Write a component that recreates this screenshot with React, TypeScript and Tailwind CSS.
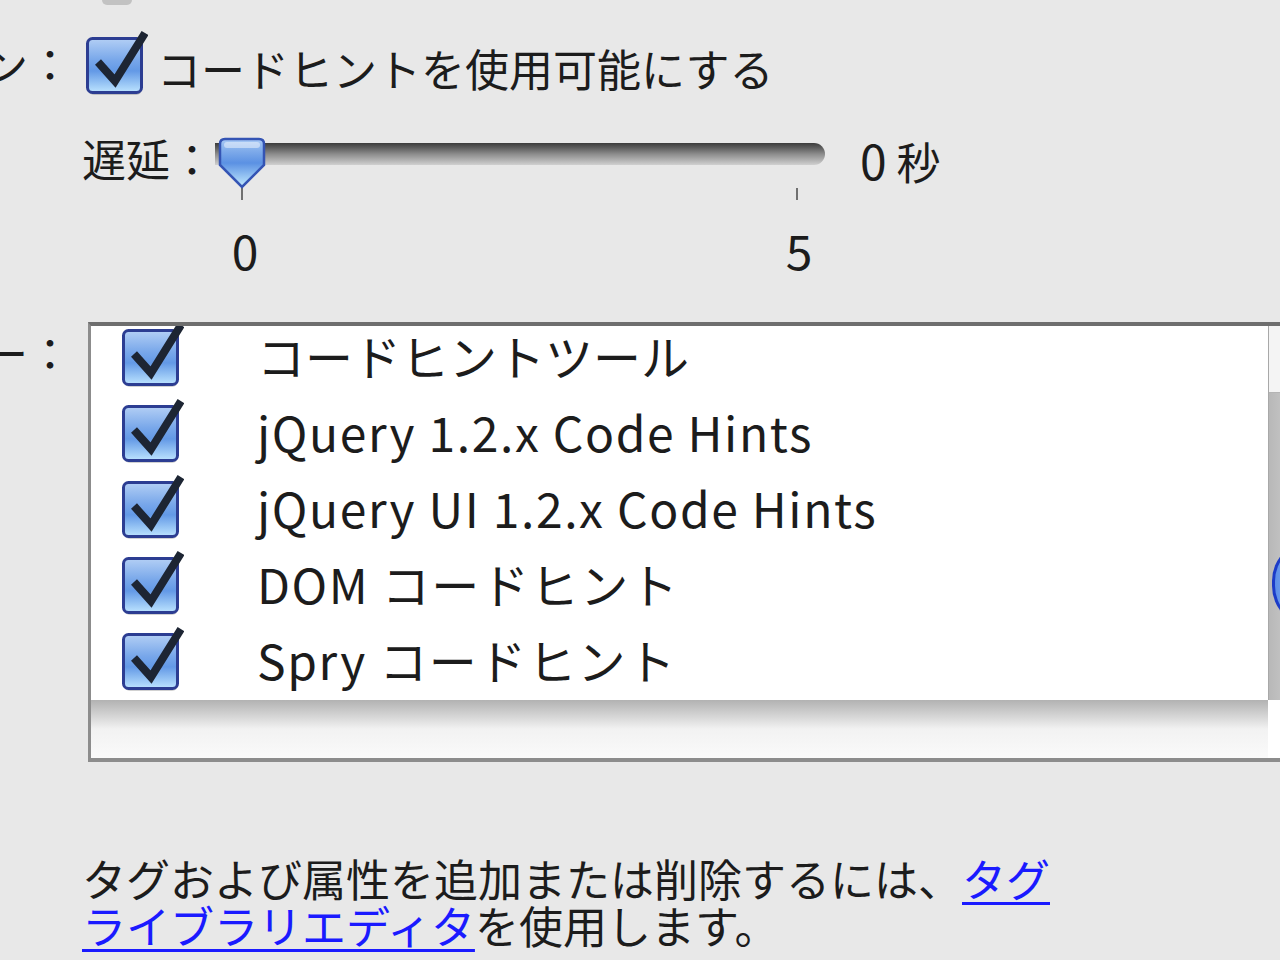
import React from "react";

// Aqua style checkbox, drawn as svg
const AquaCheck = ({ id }: { id: string }) => (
  <svg width="62" height="66" viewBox="0 0 62 66" className="shrink-0">
    <defs>
      <linearGradient id={id} x1="0" y1="0" x2="0" y2="1">
        <stop offset="0" stopColor="#b3cff5" />
        <stop offset="0.4" stopColor="#78a7ea" />
        <stop offset="0.6" stopColor="#6399e6" />
        <stop offset="1" stopColor="#bde4ff" />
      </linearGradient>
    </defs>
    <rect x="2" y="12" width="54" height="53" rx="6" fill="#000" opacity="0.18" />
    <rect x="1.5" y="8.5" width="54" height="54" rx="5" fill={`url(#${id})`} stroke="#2c3d92" strokeWidth="3" />
    <path d="M12 32 L29 51 L59 3" fill="none" stroke="#1d2533" strokeWidth="8" strokeLinejoin="miter" />
  </svg>
);

const Thumb = () => (
  <svg width="48" height="52" viewBox="0 0 48 52">
    <defs>
      <linearGradient id="thumbfill" x1="0" y1="0" x2="0" y2="1">
        <stop offset="0" stopColor="#a9c9f5" />
        <stop offset="0.25" stopColor="#7fabea" />
        <stop offset="0.5" stopColor="#5b91e3" />
        <stop offset="1" stopColor="#c4ecff" />
      </linearGradient>
    </defs>
    <path d="M7 2 H41 Q46 2 46 7 V28 L24 50 L2 28 V7 Q2 2 7 2 Z" fill="url(#thumbfill)" stroke="#3454b4" strokeWidth="2.5" />
    <rect x="6" y="5" width="36" height="6" rx="3" fill="#ffffff" opacity="0.45" />
  </svg>
);

const hints = [
  { label: "コードヒントツール", latin: false },
  { label: "jQuery 1.2.x Code Hints", latin: true },
  { label: "jQuery UI 1.2.x Code Hints", latin: true },
  { label: "DOM コードヒント", latin: true },
  { label: "Spry コードヒント", latin: true },
];

export default function App() {
  return (
    <div className="w-[1280px] h-[960px] overflow-hidden bg-[#e8e8e8] text-[#1c1c1c] font-['Noto_Sans_CJK_JP',sans-serif] flex flex-col">
      {/* bottom of a control that is cut off above */}
      <div className="ml-[102px] w-[30px] h-[5px] rounded-b-full bg-[#c2c2c2]" />

      {/* code hint option */}
      <div className="mt-[25px] flex items-center h-[66px]">
        <div className="w-[72px] shrink-0 overflow-hidden flex justify-end">
          <span className="shrink-0 whitespace-nowrap text-[44px] leading-none">コードヒントオプション：</span>
        </div>
        <div className="ml-[14px] shrink-0">
          <AquaCheck id="c0" />
        </div>
        <span className="ml-[9px] mt-[10px] text-[44px] leading-none whitespace-nowrap">コードヒントを使用可能にする</span>
      </div>

      {/* delay slider */}
      <div className="mt-[39px] ml-[82px] flex items-start">
        <span className="mt-[1px] text-[44px] leading-none whitespace-nowrap">遅延：</span>
        <div className="relative ml-[1px] w-[610px] shrink-0">
          <div className="mt-[8px] h-[22px] rounded-r-full bg-linear-to-b from-[#3c3c3c] via-[#8c8c8c] to-[#d0d0d0]" />
          <div className="absolute left-[3px] top-[2px]">
            <Thumb />
          </div>
          <div className="mt-[23px] h-[12px] flex justify-between pl-[26px] pr-[27px]">
            <div className="w-[2px] h-full bg-[#707070]" />
            <div className="w-[2px] h-full bg-[#707070]" />
          </div>
          <div className="mt-[25px] flex justify-between pl-[10px] pr-[6px] text-[48px] leading-none">
            <span className="w-[40px] text-center">0</span>
            <span className="w-[40px] text-center">5</span>
          </div>
        </div>
        <span className="ml-[35px] text-[44px] leading-none whitespace-nowrap">
          <span className="text-[48px]">0</span> 秒
        </span>
      </div>

      {/* menu list */}
      <div className="mt-[49px] flex items-start">
        <div className="mt-[8px] w-[72px] shrink-0 overflow-hidden flex justify-end">
          <span className="shrink-0 whitespace-nowrap text-[44px] leading-none">メニュー：</span>
        </div>
        <div className="ml-[16px] w-[1225px] shrink-0 border-l-[3px] border-b-[4px] border-t-[4px] border-[#8c8c8c] border-t-[#6e6e6e] flex flex-col">
          <div className="h-[374px] flex">
            <div className="flex-1 overflow-hidden bg-white">
              <div className="-mt-[9px]">
                {hints.map((h, i) => (
                  <div key={h.label} className="h-[76px] flex items-center pl-[31px]">
                    <AquaCheck id={`c${i + 1}`} />
                    <span
                      className={
                        h.latin
                          ? "ml-[73px] text-[48px] leading-none whitespace-nowrap tracking-[1.6px]"
                          : "ml-[73px] text-[48px] leading-none whitespace-nowrap"
                      }
                    >
                      {h.label}
                    </span>
                  </div>
                ))}
              </div>
            </div>
            <div className="w-[45px] shrink-0 border-l border-[#a8a8a8] flex flex-col">
              <div className="h-[67px] bg-[#f4f4f4] border-b border-[#b4b4b4]" />
              <div className="flex-1 bg-linear-to-r from-[#b8b8b8] to-[#dadada]">
                <div className="mt-[147px] ml-[3px] h-[87px] rounded-l-full border-[3px] border-[#1c3cc8] bg-linear-to-r from-[#5b8ee8] to-[#a8ccff]" />
              </div>
            </div>
          </div>
          <div className="h-[58px] flex">
            <div className="flex-1 bg-linear-to-b from-[#b2b2b2] via-[#f2f2f2] to-[#fafafa]" />
            <div className="w-[45px] shrink-0 bg-white" />
          </div>
        </div>
      </div>

      {/* tag library note */}
      <p className="mt-[93px] ml-[82px] w-[990px] text-[44px] leading-[47px]">
        タグおよび属性を追加または削除するには、
        <a href="#" className="text-[#1a1aff] underline decoration-[3px] underline-offset-[5px]">タグライブラリエディタ</a>
        を使用します。
      </p>
    </div>
  );
}
